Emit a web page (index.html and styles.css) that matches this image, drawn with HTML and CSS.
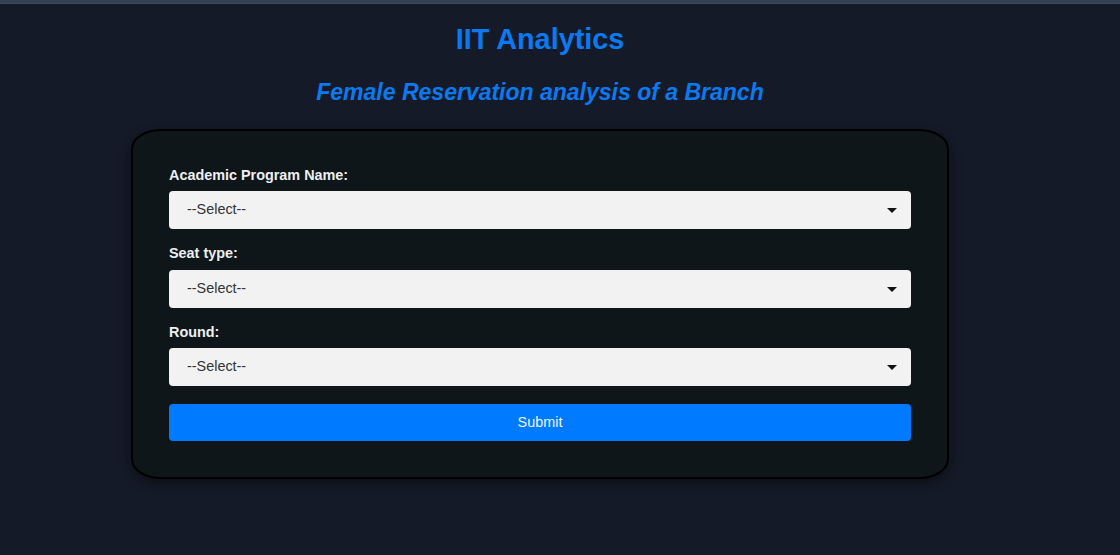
FILE: index.html
```html
<!DOCTYPE html>
<html lang="en">
<head>
<meta charset="utf-8">
<title>IIT Analytics</title>
<link rel="stylesheet" href="styles.css">
</head>
<body>
<div class="topbar"></div>
<main class="page">
  <h1 class="title">IIT Analytics</h1>
  <h2 class="subtitle">Female Reservation analysis of a Branch</h2>
  <form class="card">
    <div class="group">
      <label class="label" for="program">Academic Program Name:</label>
      <div class="select-wrap">
        <select id="program" class="select"><option>--Select--</option></select>
        <span class="caret"></span>
      </div>
    </div>
    <div class="group">
      <label class="label" for="seat">Seat type:</label>
      <div class="select-wrap">
        <select id="seat" class="select"><option>--Select--</option></select>
        <span class="caret"></span>
      </div>
    </div>
    <div class="group">
      <label class="label" for="round">Round:</label>
      <div class="select-wrap">
        <select id="round" class="select"><option>--Select--</option></select>
        <span class="caret"></span>
      </div>
    </div>
    <button type="button" class="submit">Submit</button>
  </form>
</main>
</body>
</html>
```
FILE: styles.css
```css
html, body {
  margin: 0;
  padding: 0;
}
body {
  background: #141a27;
  font-family: "Liberation Sans", Arial, sans-serif;
  min-height: 555px;
}
.topbar {
  height: 3px;
  background: #334152;
  border-bottom: 1px solid #3c4a5c;
}
.page {
  width: 1080px;
  display: flex;
  flex-direction: column;
  align-items: center;
}
.title {
  margin: 19px 0 0;
  font-size: 28.8px;
  line-height: 33px;
  font-weight: bold;
  color: #0a7af2;
}
.subtitle {
  margin: 23px 0 0;
  font-size: 23px;
  line-height: 26px;
  font-weight: bold;
  font-style: italic;
  color: #0a7af2;
}
.card {
  margin-top: 24px;
  width: 742px;
  padding: 35.5px 36px 36px;
  background: #0f1619;
  border: 2px solid #000;
  border-radius: 30px / 20px;
  box-shadow: 0 4px 12px rgba(0, 0, 0, 0.45);
  display: flex;
  flex-direction: column;
}
.group {
  display: flex;
  flex-direction: column;
  margin-bottom: 16px;
}
.label {
  font-size: 14.4px;
  line-height: 16.55px;
  font-weight: bold;
  color: #eceff3;
  margin-bottom: 8px;
}
.select-wrap {
  position: relative;
}
.select {
  appearance: none;
  -webkit-appearance: none;
  width: 100%;
  height: 38px;
  border: none;
  border-radius: 4px;
  background: #f2f2f2;
  color: #333;
  font-family: "Liberation Sans", Arial, sans-serif;
  font-size: 14.4px;
  padding: 0 18px 2px;
  margin: 0;
  outline: none;
}
.caret {
  position: absolute;
  right: 14px;
  top: 17px;
  width: 0;
  height: 0;
  border-left: 5px solid transparent;
  border-right: 5px solid transparent;
  border-top: 5px solid #111;
  pointer-events: none;
}
.submit {
  margin-top: 1.4px;
  height: 37px;
  border: none;
  border-radius: 4px;
  background: #007bff;
  color: #f1f5ff;
  font-family: "Liberation Sans", Arial, sans-serif;
  font-size: 14.4px;
  padding: 0;
}
```
